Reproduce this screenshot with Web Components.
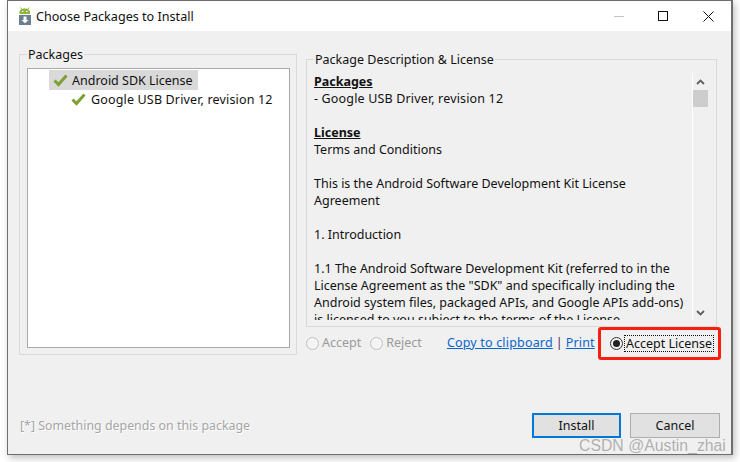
<!DOCTYPE html>
<html>
<head>
<meta charset="utf-8">
<title>Choose Packages to Install</title>
<style>
  html, body { margin: 0; height: 100%; background: #fff; overflow: hidden; }
  body { font: 12.5px/17px "Noto Sans", "Open Sans", sans-serif; color: #111; }
  .left { width: 278px; flex: none; }
  .right { flex: 1; min-width: 0; display: flex; flex-direction: column; margin-top: 5px; }
  .main { display: flex; gap: 9px; }
  .spacer { flex: 1; }
  .foot { display: flex; align-items: center; gap: 9px; margin-right: -3px; }
  .foot .note { flex: 1; color: #a6a6a6; text-shadow: 1px 1px 0 #fff; margin-left: 1px; font-size: 12.4px; }
  .wide { letter-spacing: .16px; }
</style>
</head>
<body>
<app-window caption="Choose Packages to Install">
  <div class="main">
    <group-box class="left" caption="Packages">
      <package-tree>
        <tree-row selected>Android SDK License</tree-row>
        <tree-row level="1"><span class="wide">Google USB Driver, revision 12</span></tree-row>
      </package-tree>
    </group-box>
    <div class="right">
      <group-box caption="Package Description &amp; License" flush>
        <license-pane>
          <u><b>Packages</b></u><br>
          <span class="wide">- Google USB Driver, revision 12</span><br>
          <br>
          <u><b>License</b></u><br>
          Terms and Conditions<br>
          <br>
          This is the Android Software Development Kit License<br>
          Agreement<br>
          <br>
          1. Introduction<br>
          <br>
          1.1 The Android Software Development Kit (referred to in the<br>
          License Agreement as the "SDK" and specifically including the<br>
          Android system files, packaged APIs, and Google APIs add-ons)<br>
          is licensed to you subject to the terms of the License
        </license-pane>
      </group-box>
      <license-actions></license-actions>
    </div>
  </div>
  <div class="spacer"></div>
  <div class="foot">
    <span class="note">[*] Something depends on this package</span>
    <dialog-button focused>Install</dialog-button>
    <dialog-button>Cancel</dialog-button>
  </div>
  <water-mark>CSDN @Austin_zhai</water-mark>
</app-window>

<script>
class AppWindow extends HTMLElement {
  constructor() {
    super();
    this.attachShadow({ mode: "open" });
    this.shadowRoot.innerHTML = /*html*/ `
      <style>
        :host {
          display: flex;
          flex-direction: column;
          box-sizing: border-box;
          position: relative;
          width: 726px;
          height: 455px;
          margin-left: 7px;
          border: 1px solid #6e6e6e;
          border-right-width: 2px;
          background: #f0f0f0;
          box-shadow: 2px 3px 7px rgba(0,0,0,.25);
        }
        .bar {
          height: 30px;
          flex: none;
          background: #fff;
          display: flex;
          align-items: center;
        }
        .app { margin: 0 4px 0 10px; display: block; }
        .title { flex: 1; font-size: 12.6px; }
        .ctl { width: 45px; height: 30px; display: flex; align-items: center; justify-content: center; }
        .body {
          flex: 1;
          min-height: 0;
          display: flex;
          flex-direction: column;
          padding: 15px 14px 16px 11px;
        }
      </style>
      <div class="bar">
        <svg class="app" width="14" height="18" viewBox="0 0 14 18">
          <path d="M1.500 7V5.200C1.500 3 3.800 1.500 6.700 1.500S12 3 12 5.200V7Z" fill="#8eb33b"/>
          <path d="M3.500 2 2.500.5M10 2l1-1.500" stroke="#8eb33b"/>
          <circle cx="4.700" cy="4.500" r=".8" fill="#fff"/><circle cx="8.800" cy="4.500" r=".8" fill="#fff"/>
          <rect x="1" y="8" width="12" height="10" fill="#6a7f8f"/>
          <path d="M5.500 9.500h3V13h2L7 16.300 3.500 13h2Z" fill="#fff"/>
        </svg>
        <span class="title"></span>
        <span class="ctl"><svg width="11" height="11"><path d="M1 5.500h10" stroke="#c4c4c4"/></svg></span>
        <span class="ctl"><svg width="11" height="11"><rect x=".5" y=".5" width="9" height="9" fill="none" stroke="#111"/></svg></span>
        <span class="ctl"><svg width="11" height="11"><path d="M.5.500l10 10M10.500.500l-10 10" stroke="#111"/></svg></span>
      </div>
      <div class="body"><slot></slot></div>
    `;
    this.shadowRoot.querySelector(".title").textContent = this.getAttribute("caption");
  }
}

class GroupBox extends HTMLElement {
  constructor() {
    super();
    this.attachShadow({ mode: "open" });
    this.shadowRoot.innerHTML = /*html*/ `
      <style>
        :host { display: block; }
        fieldset {
          margin: 0;
          min-width: 0;
          border: 1px solid #d9d9d9;
          padding: 5px 6px 6px 7px;
        }
        :host([flush]) fieldset { padding: 0 8px 0 0; }
        legend { padding: 0 1px; margin-left: 0; line-height: 17px; }
        :host([flush]) legend { margin-left: 7px; }
      </style>
      <fieldset>
        <legend></legend>
        <slot></slot>
      </fieldset>
    `;
    this.shadowRoot.querySelector("legend").textContent = this.getAttribute("caption");
  }
}

class PackageTree extends HTMLElement {
  constructor() {
    super();
    this.attachShadow({ mode: "open" });
    this.shadowRoot.innerHTML = /*html*/ `
      <style>
        :host {
          display: block;
          box-sizing: border-box;
          height: 280px;
          background: #fff;
          border: 1px solid #a9a9a9;
          padding: 1px 0 0 21px;
        }
      </style>
      <slot></slot>
    `;
  }
}

class TreeRow extends HTMLElement {
  constructor() {
    super();
    this.attachShadow({ mode: "open" });
    this.shadowRoot.innerHTML = /*html*/ `
      <style>
        :host { display: flex; }
        .row {
          display: flex;
          align-items: center;
          gap: 4px;
          height: 20px;
          padding: 0 4px;
          white-space: nowrap;
        }
        :host([selected]) .row { background: #d9d9d9; padding-right: 5px; }
        :host([level="1"]) .row { margin-left: 18px; margin-top: -1px; gap: 5px; }
        svg { display: block; flex: none; }
      </style>
      <div class="row">
        <svg width="15" height="13" viewBox="0 0 15 13">
          <path d="M1.500 6.500 5.500 10.500 13.500 1.500" fill="none" stroke="#7f9f35" stroke-width="3"/>
        </svg>
        <span><slot></slot></span>
      </div>
    `;
  }
}

class LicensePane extends HTMLElement {
  constructor() {
    super();
    this.attachShadow({ mode: "open" });
    this.shadowRoot.innerHTML = /*html*/ `
      <style>
        :host { display: flex; height: 258px; padding: 5px 0 6px; box-sizing: border-box; overflow: hidden; }
        .text {
          flex: 1;
          min-width: 0;
          padding: 0 0 0 7px;
          white-space: nowrap;
          overflow: hidden;
        }
        .scroll {
          flex: none;
          width: 15px;
          border-left: 1px solid #fff;
          display: flex;
          flex-direction: column;
          align-items: center;
        }
        .up { margin: 6px 0 5px; display: block; }
        .thumb { width: 15px; height: 17px; background: #cdcdcd; }
        .down { margin-top: auto; margin-bottom: 4px; display: block; }
      </style>
      <div class="text"><slot></slot></div>
      <div class="scroll">
        <svg class="up" width="9" height="6"><path d="M1 5 4.500 1.500 8 5" fill="none" stroke="#5f5f5f" stroke-width="1.800"/></svg>
        <div class="thumb"></div>
        <svg class="down" width="9" height="6"><path d="M1 1 4.500 4.500 8 1" fill="none" stroke="#5f5f5f" stroke-width="1.800"/></svg>
      </div>
    `;
  }
}

class LicenseActions extends HTMLElement {
  constructor() {
    super();
    this.attachShadow({ mode: "open" });
    this.shadowRoot.innerHTML = /*html*/ `
      <style>
        :host {
          display: flex;
          align-items: center;
          height: 33px;
          white-space: nowrap;
          margin-right: -4px;
        }
        .dim, .links { padding-bottom: 2px; }
        .dim { color: #9a9a9a; }
        a { color: #0a66cc; text-decoration: underline; letter-spacing: .18px; }
        .sep { color: #5a1a5a; margin: 0 3px; }
        .links { margin-left: 25px; }
        .mark {
          margin-left: auto;
          box-sizing: border-box;
          width: 123px;
          height: 33px;
          border: 3px solid #fa1e0e;
          border-radius: 3px;
          display: flex;
          align-items: center;
          padding-left: 9px;
        }
        .focus { outline: 1px dotted #111; line-height: 15px; margin-left: 2px; padding: 0 1px; }
        radio-dot + .dim { margin-left: 3px; }
        .gap { width: 9px; }
      </style>
      <radio-dot></radio-dot><span class="dim">Accept</span>
      <span class="gap"></span>
      <radio-dot></radio-dot><span class="dim">Reject</span>
      <span class="links"><a>Copy to clipboard</a><span class="sep">|</span><a>Print</a></span>
      <span class="mark"><radio-dot checked></radio-dot><span class="focus">Accept License</span></span>
    `;
  }
}

class RadioDot extends HTMLElement {
  constructor() {
    super();
    this.attachShadow({ mode: "open" });
    this.shadowRoot.innerHTML = /*html*/ `
      <style>
        :host {
          display: flex;
          align-items: center;
          justify-content: center;
          box-sizing: border-box;
          flex: none;
          width: 13px;
          height: 13px;
          border-radius: 50%;
          border: 1px solid #c0c0c0;
          background: #f4f4f4;
        }
        :host([checked]) { border-color: #333; background: #f0f0f0; }
        :host([checked]) i { display: block; width: 7px; height: 7px; border-radius: 50%; background: #222; }
      </style>
      <i></i>
    `;
  }
}

class DialogButton extends HTMLElement {
  constructor() {
    super();
    this.attachShadow({ mode: "open" });
    this.shadowRoot.innerHTML = /*html*/ `
      <style>
        :host {
          display: flex;
          align-items: center;
          justify-content: center;
          box-sizing: border-box;
          width: 90px;
          height: 25px;
          background: #e1e1e1;
          border: 1px solid #adadad;
        }
        :host([focused]) { border: 2px solid #0078d7; width: 89px; }
      </style>
      <slot></slot>
    `;
  }
}

class WaterMark extends HTMLElement {
  constructor() {
    super();
    this.attachShadow({ mode: "open" });
    this.shadowRoot.innerHTML = /*html*/ `
      <style>
        :host {
          position: absolute;
          left: 571px;
          top: 435px;
          font: 15.800px/20px "Liberation Sans", sans-serif;
          color: rgba(120,120,120,.55);
          white-space: nowrap;
        }
      </style>
      <slot></slot>
    `;
  }
}

customElements.define("app-window", AppWindow);
customElements.define("group-box", GroupBox);
customElements.define("package-tree", PackageTree);
customElements.define("tree-row", TreeRow);
customElements.define("license-pane", LicensePane);
customElements.define("license-actions", LicenseActions);
customElements.define("radio-dot", RadioDot);
customElements.define("dialog-button", DialogButton);
customElements.define("water-mark", WaterMark);
</script>
</body>
</html>
